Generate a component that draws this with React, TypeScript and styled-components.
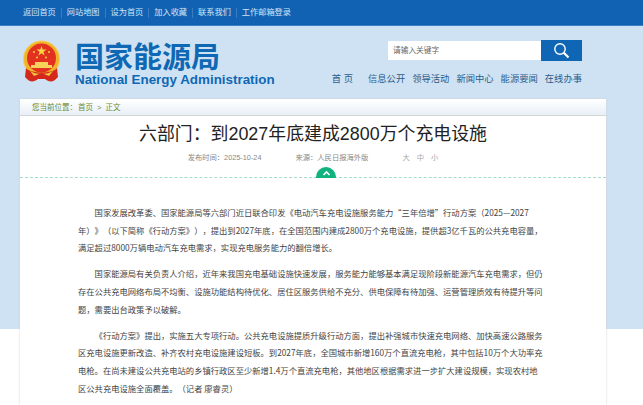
import React from 'react';
import styled, { createGlobalStyle } from 'styled-components';

const GlobalStyle = createGlobalStyle`
    html, body {
        margin: 0;
        padding: 0;
    }
    body {
        height: 405px;
        overflow: hidden;
        background: linear-gradient(#cfe2f3 0 329px, #fff 329px);
        font-family: "Liberation Sans", "Noto Sans CJK SC", sans-serif;
    }
`;

const TopBar = styled.nav`
    display: flex;
    align-items: center;
    box-sizing: border-box;
    height: 26px;
    padding-left: 23px;
    background: #1162b3;
    border-bottom: 1px solid #3b80c4;
`;

const TopLink = styled.a`
    font-size: 8.2px;
    color: #d3e4f5;
    padding-right: 5px;
    margin-right: 5px;
    border-right: 1px solid #3a7cc0;
    line-height: 10px;

    &:last-child {
        border-right: 0;
    }
`;

const Header = styled.header`
    display: flex;
    justify-content: space-between;
    height: 73px;
    padding: 14px 61px 0 21px;
    box-sizing: border-box;
`;

const Brand = styled.div`
    display: flex;
    gap: 13px;
`;

const BrandText = styled.div`
    display: flex;
    flex-direction: column;
    margin-top: -2px;
`;

const BrandName = styled.div`
    font-family: "Noto Sans CJK SC", sans-serif;
    font-size: 29px;
    font-weight: 700;
    line-height: 34px;
    color: #0f68b4;
`;

const BrandEnglish = styled.div`
    font-size: 13.4px;
    font-weight: 700;
    line-height: 13px;
    margin-top: 1px;
    color: #0f68b4;
    white-space: nowrap;
`;

const HeaderRight = styled.div`
    display: flex;
    flex-direction: column;
    align-items: flex-end;
    gap: 12px;
`;

const Search = styled.form`
    display: flex;
    align-items: center;
    width: 194px;
    height: 21px;
`;

const SearchInput = styled.div`
    flex: 1;
    height: 19px;
    background: #fff;
    padding-left: 5px;
    font-size: 7.7px;
    line-height: 20px;
    color: #666;
`;

const SearchButton = styled.div`
    display: flex;
    align-items: center;
    justify-content: center;
    width: 41px;
    height: 21px;
    background: #0f66b4;
`;

const MainNav = styled.div`
    display: flex;
    gap: 7px;
    font-size: 9.3px;
    line-height: 12px;
    color: #2a5d8c;
`;

const HomeLink = styled.span`
    margin-right: 8px;
`;

const Panel = styled.main`
    width: 586px;
    height: 306px;
    margin-left: 20px;
    background: #fff;
    box-shadow: 0 0 2px #d0d0d0;
    overflow: hidden;
`;

const Breadcrumb = styled.div`
    display: flex;
    gap: 1px;
    height: 16px;
    padding-left: 12px;
    font-size: 7.5px;
    line-height: 17px;
    color: #6c8a2e;
    background: linear-gradient(#fff, #e9eff7);
    border-bottom: 1px solid #d5d5d5;
`;

const Crumbs = styled.span`
    word-spacing: 2px;
`;

const Title = styled.h1`
    margin: 0;
    padding-top: 6px;
    font-family: "Liberation Sans", "Noto Sans CJK SC", sans-serif;
    font-size: 17.9px;
    font-weight: 400;
    line-height: 24px;
    text-align: center;
    color: #222;
`;

const Meta = styled.div`
    display: flex;
    justify-content: center;
    gap: 34px;
    margin-top: 7px;
    font-size: 7.3px;
    line-height: 10px;
    color: #888;
`;

const FontSizes = styled.span`
    word-spacing: 5px;
    color: #aaa;
`;

const Divider = styled.div`
    position: relative;
    margin-top: 14px;
    border-top: 1px dashed #a5dccb;
`;

const Collapse = styled.div`
    position: absolute;
    left: 296px;
    top: -11px;
    display: flex;
    justify-content: center;
    width: 20px;
    height: 11px;
    border-radius: 10px 10px 0 0;
    background: #12b27f;
`;

const Article = styled.article`
    display: flex;
    flex-direction: column;
    gap: 8.6px;
    padding: 26px 0 0 58px;
`;

const Paragraph = styled.div`
    font-family: "Noto Sans CJK SC", "Liberation Sans", sans-serif;
    font-size: 8.3px;
    line-height: 17.6px;
    color: #444;
    white-space: nowrap;
    text-spacing-trim: space-all;
`;

const paragraphs = [
    [
        '　　国家发展改革委、国家能源局等六部门近日联合印发《电动汽车充电设施服务能力“三年倍增”行动方案（2025—2027',
        '年）》（以下简称《行动方案》），提出到2027年底，在全国范围内建成2800万个充电设施，提供超3亿千瓦的公共充电容量，',
        '满足超过8000万辆电动汽车充电需求，实现充电服务能力的翻倍增长。',
    ],
    [
        '　　国家能源局有关负责人介绍，近年来我国充电基础设施快速发展，服务能力能够基本满足现阶段新能源汽车充电需求，但仍',
        '存在公共充电网络布局不均衡、设施功能结构待优化、居住区服务供给不充分、供电保障有待加强、运营管理质效有待提升等问',
        '题，需要出台政策予以破解。',
    ],
    [
        '　　《行动方案》提出，实施五大专项行动。公共充电设施提质升级行动方面，提出补强城市快速充电网络、加快高速公路服务',
        '区充电设施更新改造、补齐农村充电设施建设短板。到2027年底，全国城市新增160万个直流充电枪，其中包括10万个大功率充',
        '电枪。在尚未建设公共充电站的乡镇行政区至少新增1.4万个直流充电枪，其他地区根据需求进一步扩大建设规模，实现农村地',
        '区公共充电设施全面覆盖。（记者 廖睿灵）',
    ],
];

const topLinks = ['返回首页', '网站地图', '设为首页', '加入收藏', '联系我们', '工作邮箱登录'];
const navLinks = ['信息公开', '领导活动', '新闻中心', '能源要闻', '在线办事'];

const Emblem = () => (
    <svg width="41" height="44" viewBox="0 0 41 44">
        <circle cx="20.5" cy="19" r="18" fill="#f0b429" stroke="#f7cf5c" />
        <circle cx="20.5" cy="18" r="14.5" fill="#e2321f" />
        <polygon points="20.5,6 21.7,9.6 25.5,9.6 22.4,11.8 23.6,15.4 20.5,13.2 17.4,15.4 18.6,11.8 15.5,9.6 19.3,9.6" fill="#f8d648" />
        <circle cx="13" cy="12" r="1" fill="#f8d648" />
        <circle cx="28" cy="12" r="1" fill="#f8d648" />
        <circle cx="16" cy="17.5" r="1" fill="#f8d648" />
        <circle cx="25" cy="17.5" r="1" fill="#f8d648" />
        <path d="M10 28 L10 25 L14 25 L14 22 L27 22 L27 25 L31 25 L31 28 Z" fill="#f6d25a" />
        <path d="M5 28 C9 34 32 34 36 28 L37 37 C32 43 28 42 24 39 L17 39 C13 42 9 43 4 37 Z" fill="#d5281c" />
        <path d="M9 31 C15 35 26 35 32 31 L28 36 L23 34 L18 34 L13 36 Z" fill="#f3c63e" />
    </svg>
);

const SearchIcon = () => (
    <svg width="17" height="17" viewBox="0 0 17 17" fill="none" stroke="#fff">
        <circle cx="7" cy="7" r="5.2" strokeWidth="1.4" />
        <path d="M10.8 10.8 L15.5 15.5" strokeWidth="2.2" />
    </svg>
);

const ChevronUp = () => (
    <svg width="9" height="10" viewBox="0 0 9 10" fill="none" stroke="#fff" strokeWidth="1.6">
        <path d="M1.5 8 L4.5 5 L7.5 8" />
    </svg>
);

const App = () => (
    <>
        <GlobalStyle />
        <TopBar>
            {topLinks.map(link => (
                <TopLink key={link}>{link}</TopLink>
            ))}
        </TopBar>
        <Header>
            <Brand>
                <Emblem />
                <BrandText>
                    <BrandName>国家能源局</BrandName>
                    <BrandEnglish>National Energy Administration</BrandEnglish>
                </BrandText>
            </Brand>
            <HeaderRight>
                <Search>
                    <SearchInput>请输入关键字</SearchInput>
                    <SearchButton>
                        <SearchIcon />
                    </SearchButton>
                </Search>
                <MainNav>
                    <HomeLink>首 页</HomeLink>
                    {navLinks.map(link => (
                        <span key={link}>{link}</span>
                    ))}
                </MainNav>
            </HeaderRight>
        </Header>
        <Panel>
            <Breadcrumb>
                <span>您当前位置：</span>
                <Crumbs>首页 &gt; 正文</Crumbs>
            </Breadcrumb>
            <Title>六部门：到2027年底建成2800万个充电设施</Title>
            <Meta>
                <span>发布时间：2025-10-24</span>
                <span>来源：人民日报海外版</span>
                <FontSizes>大 中 小</FontSizes>
            </Meta>
            <Divider>
                <Collapse>
                    <ChevronUp />
                </Collapse>
            </Divider>
            <Article>
                {paragraphs.map((lines, index) => (
                    <Paragraph key={index}>
                        {lines.map(line => (
                            <div key={line}>{line}</div>
                        ))}
                    </Paragraph>
                ))}
            </Article>
        </Panel>
    </>
);

export default App;
